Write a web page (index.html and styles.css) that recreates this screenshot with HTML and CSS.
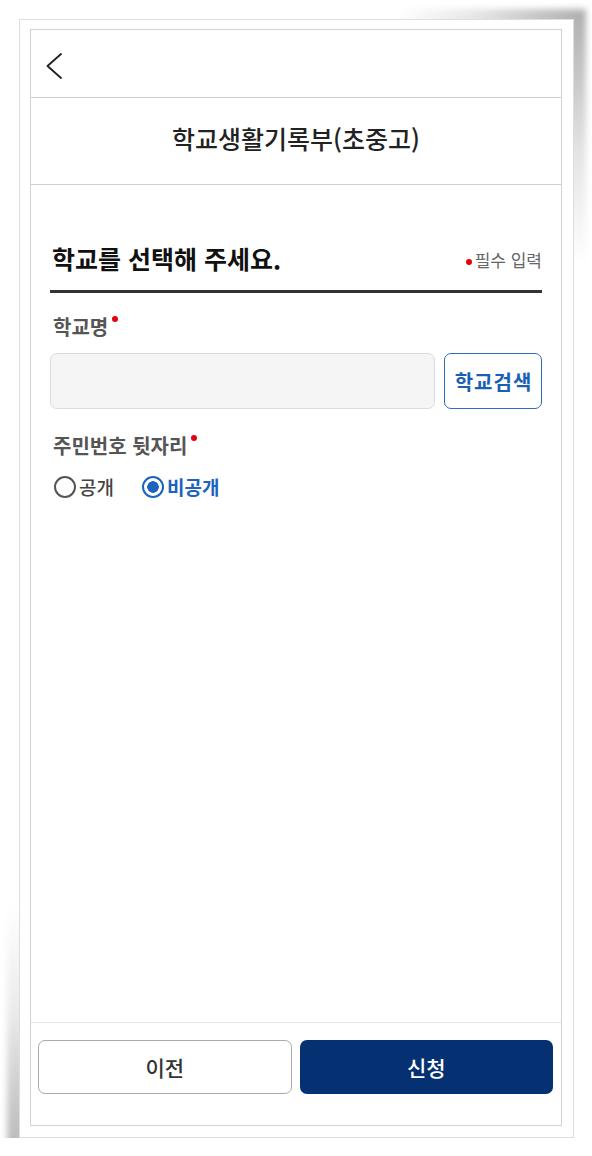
FILE: index.html
```html
<!DOCTYPE html>
<html lang="ko">
  <head>
    <meta charset="utf-8" />
    <meta name="viewport" content="width=device-width" />
    <title>학교생활기록부(초중고)</title>
    <link rel="stylesheet" href="styles.css">
  </head>

  <body>
    <div class="frame">
      <div class="screen">
        <div class="topbar">
          <button class="back" aria-label="뒤로">
            <svg width="16" height="26" viewBox="0 0 16 26">
              <polyline points="15,1 1.5,13 15,25" fill="none" stroke="#222" stroke-width="1.8" stroke-linecap="round" stroke-linejoin="round" />
            </svg>
          </button>
        </div>
        <div class="titlebar">
          <h1>학교생활기록부(초중고)</h1>
        </div>

        <div class="content">
          <div class="heading-row">
            <h2>학교를 선택해 주세요.</h2>
            <span class="required-note">필수 입력</span>
          </div>

          <div class="field">
            <label class="field-label required" for="schoolname">학교명</label>
            <div class="search-row">
              <input id="schoolname" class="school-input" type="text" />
              <button class="search-btn">학교검색</button>
            </div>
          </div>

          <div class="field">
            <span class="field-label required">주민번호 뒷자리</span>
            <div class="radio-row">
              <label class="radio"><input type="radio" name="rrn" value="open" /><span class="mark"></span>공개</label>
              <label class="radio"><input type="radio" name="rrn" value="closed" checked /><span class="mark"></span>비공개</label>
            </div>
          </div>
        </div>

        <div class="footer">
          <button class="btn btn-prev">이전</button>
          <button class="btn btn-submit">신청</button>
        </div>
      </div>
    </div>
  </body>
</html>
```

FILE: styles.css
```css
* {
  box-sizing: border-box;
  font-family: "Noto Sans CJK KR", "Noto Sans", sans-serif;
}

body {
  margin: 0;
  background: #fff;
}

/* paper frame with lifted corners */
.frame {
  position: relative;
  width: 555px;
  height: 1119px;
  margin: 19px 0 0 19px;
  padding: 9px 11px 11px 10px;
  background: #fff;
  border: 1px solid #dedede;
}

.frame::before,
.frame::after {
  content: "";
  position: absolute;
  z-index: -1;
  filter: blur(3px);
}

.frame::before {
  top: -11px;
  right: -13px;
  width: 190px;
  height: 260px;
  background: radial-gradient(ellipse at top right, rgba(0, 0, 0, 0.32), rgba(0, 0, 0, 0.1) 40%, transparent 70%);
}

.frame::after {
  bottom: -14px;
  left: -13px;
  width: 320px;
  height: 250px;
  background: radial-gradient(ellipse at bottom left, rgba(0, 0, 0, 0.28), rgba(0, 0, 0, 0.08) 40%, transparent 70%);
}

.screen {
  display: flex;
  flex-direction: column;
  height: 100%;
  border: 1px solid #d2d2d2;
  background: #fff;
}

.topbar {
  height: 68px;
  padding: 23px 0 0 15px;
  border-bottom: 1px solid #cfcfcf;
}

.back {
  padding: 0;
  border: 0;
  background: none;
  display: block;
}

.titlebar {
  height: 87px;
  display: flex;
  align-items: center;
  justify-content: center;
  padding-bottom: 6px;
  border-bottom: 1px solid #cfcfcf;
}

h1 {
  margin: 0;
  font-size: 25px;
  font-weight: 500;
  color: #222;
}

.content {
  flex: 1;
  padding: 0 19px;
}

.heading-row {
  display: flex;
  justify-content: space-between;
  align-items: center;
  padding: 56px 0 15px 2px;
  border-bottom: 3px solid #333;
}

h2 {
  margin: 0;
  font-size: 25px;
  line-height: 34px;
  font-weight: 700;
  color: #111;
}

.required-note {
  font-size: 17px;
  color: #666;
  padding-top: 3px;
}

.required-note::before {
  content: "";
  display: inline-block;
  width: 6px;
  height: 6px;
  border-radius: 50%;
  background: #e60012;
  margin-right: 3px;
  vertical-align: middle;
}

.field {
  padding-top: 21px;
}

.field + .field {
  padding-top: 24px;
}

.field-label {
  display: block;
  padding-left: 3px;
  font-size: 20px;
  line-height: 26px;
  font-weight: 700;
  color: #555;
}

.field-label.required::after {
  content: "";
  display: inline-block;
  width: 6px;
  height: 6px;
  border-radius: 50%;
  background: #e60012;
  margin: 2px 0 0 4px;
  vertical-align: top;
}

.search-row {
  display: flex;
  gap: 9px;
  margin-top: 13px;
}

.school-input {
  flex: 1;
  height: 56px;
  border: 1px solid #dcdcdc;
  border-radius: 7px;
  background: #f5f5f5;
}

.search-btn {
  width: 98px;
  height: 56px;
  border: 1.5px solid #2b6cc0;
  border-radius: 7px;
  background: #fff;
  color: #1b5fb4;
  font-size: 20px;
  font-weight: 700;
  letter-spacing: 1px;
  padding: 0 0 0 1px;
}

.radio-row {
  display: flex;
  gap: 28px;
  margin-top: 17px;
  padding-left: 4px;
}

.radio {
  display: flex;
  align-items: center;
  gap: 3px;
  font-size: 19px;
  line-height: 22px;
  font-weight: 500;
  color: #444;
}

.radio input {
  display: none;
}

.mark {
  width: 22px;
  height: 22px;
  border: 2.5px solid #555;
  border-radius: 50%;
  background: #fff;
}

.radio input:checked + .mark {
  border-color: #1a64c0;
  background: radial-gradient(circle, #1a64c0 0 5.5px, #fff 6px);
}

.radio:has(input:checked) {
  color: #1a64c0;
  font-weight: 700;
}

.footer {
  display: grid;
  grid-template-columns: 1fr 1fr;
  gap: 8px;
  padding: 17px 8px 31px 7px;
  border-top: 1px solid #e6e6e6;
}

.btn {
  height: 54px;
  border-radius: 7px;
  font-size: 21px;
  font-weight: 500;
}

.btn-prev {
  border: 1px solid #aaa;
  background: #fff;
  color: #333;
}

.btn-submit {
  border: 0;
  background: #053071;
  color: #fff;
}
```
